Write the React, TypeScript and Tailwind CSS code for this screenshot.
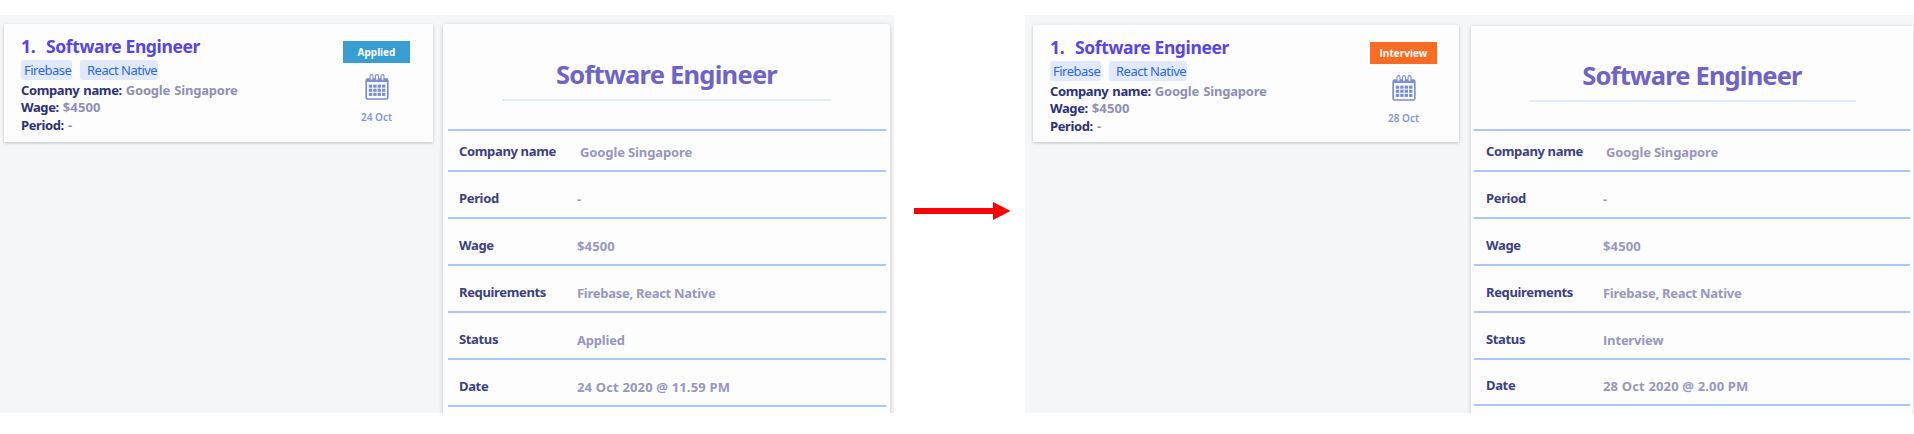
type Job = {
  status: string;
  day: string;
  date: string;
  badge: string;
  statusFont: string;
};

type Layout = {
  panel: string;
  card: string;
  detail: string;
  heading: string;
  rule: string;
  table: string;
  rows: string[];
  value: string;
};

const left: Layout = {
  panel: "w-[894px] pl-[4px] pt-[9px]",
  card: "w-[429px] h-[118px] pr-[23px]",
  detail: "ml-[10px] w-[447px] rounded-t-[3px]",
  heading: "mt-[39px] tracking-[-0.75px]",
  rule: "mt-[15px] w-[329px]",
  table: "mt-[28px] ml-[5px] mr-[4px]",
  rows: ["h-[41px] pl-[11px]", "h-[47px] pl-[11px]", "h-[47px] pl-[11px]", "h-[47px] pl-[11px]", "h-[47px] pl-[11px]", "h-[47px] pl-[11px]"],
  value: "w-[118px]",
};

const right: Layout = {
  panel: "w-[889px] pl-[8px] pt-[10px]",
  card: "w-[426px] h-[117px] pr-[22px]",
  detail: "ml-[12px] mt-[1px] w-[442px]",
  heading: "mt-[38px] tracking-[-0.85px]",
  rule: "mt-[15px] w-[327px]",
  table: "mt-[27px] mx-[3px]",
  rows: ["h-[41px] pl-[12px]", "h-[47px] pl-[12px]", "h-[47px] pl-[12px]", "h-[47px] pl-[12px]", "h-[47px] pl-[12px]", "h-[46px] pl-[12px]"],
  value: "w-[117px]",
};

function Calendar() {
  const cells = [0, 1, 2].flatMap((r) => [0, 1, 2, 3].map((c) => [c, r]));
  return (
    <svg className="mt-[11px] h-[26px] w-[24px]" viewBox="0 0 24 26" fill="none">
      <rect x="1.2" y="5.2" width="21.6" height="19.8" rx="1.6" stroke="#7b8fd0" strokeWidth="1.7" />
      <path d="M1 4.8h22v3.2H1z" fill="#7b8fd0" />
      {[5, 10.5, 16].map((x) => (
        <rect key={x} x={x} y="0.6" width="3" height="5.8" rx="1.5" fill="#fdfdfd" stroke="#7b8fd0" strokeWidth="1.1" />
      ))}
      {cells.map(([c, r]) => (
        <rect key={`${c}-${r}`} x={3.8 + c * 4.4} y={10.6 + r * 4.1} width="3.4" height="3.1" fill="#7b8fd0" />
      ))}
    </svg>
  );
}

function JobCard({ job, layout }: { job: Job; layout: Layout }) {
  return (
    <div
      className={`flex shrink-0 justify-between bg-[#fdfdfd] pl-[17px] shadow-[0_1px_3px_rgba(0,0,0,0.22)] ${layout.card}`}
    >
      <div className="pt-[10px]">
        <div className="flex h-[26px] text-[17.5px] leading-[24px] font-bold tracking-[-0.38px] text-[#5645e8]">
          <span className="w-[25px]">1.</span>
          <span>Software Engineer</span>
        </div>
        <div className="flex gap-[8px] text-[13px] leading-[21px] tracking-[-0.5px] text-[#2b66f0]">
          <span className="h-[20px] w-[51px] rounded-[3px] bg-[#e0eafc] pl-[3px]">Firebase</span>
          <span className="h-[20px] w-[78px] rounded-[3px] bg-[#e0eafc] pl-[7px]">React Native</span>
        </div>
        <div className="mt-[1.5px] text-[13px] leading-[17.8px] font-bold tracking-[-0.38px] text-[#2d3178] [word-spacing:1px]">
          <div>
            Company name: <span className="tracking-[-0.2px] text-[#908fb8]">Google Singapore</span>
          </div>
          <div>
            Wage: <span className="tracking-[0.1px] text-[#908fb8]">$4500</span>
          </div>
          <div>
            Period: <span className="text-[#908fb8]">-</span>
          </div>
        </div>
      </div>
      <div className="flex flex-col items-center pt-[17px]">
        <span
          className={`h-[22px] w-[67px] text-center text-[10px] leading-[23px] font-bold text-white ${job.badge} ${job.statusFont}`}
        >
          {job.status}
        </span>
        <Calendar />
        <span className="mt-[10px] text-[10px] leading-[14px] font-semibold text-[#8495d2]">{job.day}</span>
      </div>
    </div>
  );
}

function Detail({ job, layout }: { job: Job; layout: Layout }) {
  const entries = [
    ["Company name", "Google Singapore", "pl-[3px] tracking-[-0.12px]"],
    ["Period", "-", ""],
    ["Wage", "$4500", "tracking-[0.15px]"],
    ["Requirements", "Firebase, React Native", "tracking-[-0.28px]"],
    ["Status", job.status, `tracking-[-0.2px] ${job.statusFont}`],
    ["Date", job.date, "tracking-[0.16px]"],
  ];
  return (
    <div className={`shrink-0 bg-[#fdfdfd] shadow-[0_1px_4px_rgba(0,0,0,0.22)] ${layout.detail}`}>
      <div className="flex flex-col items-center pt-px">
        <h1 className={`h-[20px] text-[25.5px] leading-[20px] font-bold text-[#6d64c8] ${layout.heading}`}>
          Software Engineer
        </h1>
        <div className={`h-[2px] bg-[#e0ebfe] ${layout.rule}`} />
      </div>
      <div className={`border-t-2 border-[#a9c7fa] ${layout.table}`}>
        {entries.map(([label, value, style], i) => (
          <div
            key={label}
            className={`flex items-end border-b-2 border-[#a9c7fa] pb-[9px] text-[13px] leading-[18px] font-bold ${layout.rows[i]}`}
          >
            <span className={`pb-px tracking-[-0.35px] text-[#3a4083] ${layout.value}`}>{label}</span>
            <span className={`text-[#9897be] ${style}`}>{value}</span>
          </div>
        ))}
      </div>
    </div>
  );
}

function Panel({ job, layout }: { job: Job; layout: Layout }) {
  return (
    <section className={`flex h-[398px] shrink-0 items-start overflow-hidden bg-[#f4f6f8] ${layout.panel}`}>
      <JobCard job={job} layout={layout} />
      <div className="flex h-[400px] items-stretch">
        <Detail job={job} layout={layout} />
      </div>
    </section>
  );
}

export default function App() {
  return (
    <main className="flex h-[434px] w-[1914px] overflow-hidden bg-white pt-[15px] font-['Noto_Sans','Open_Sans',sans-serif]">
      <Panel
        layout={left}
        job={{
          status: "Applied",
          day: "24 Oct",
          date: "24 Oct 2020 @ 11.59 PM",
          badge: "bg-[#389dd1]",
          statusFont: "font-['Noto_Sans',sans-serif]",
        }}
      />
      <div className="w-[131px] shrink-0 pt-[187px] pl-[20px]">
        <svg width="97" height="18" viewBox="0 0 97 18">
          <path d="M0 6h79V0l17.5 9L79 18v-6H0z" fill="#ff0000" />
        </svg>
      </div>
      <Panel
        layout={right}
        job={{
          status: "Interview",
          day: "28 Oct",
          date: "28 Oct 2020 @ 2.00 PM",
          badge: "bg-[#fa6b24]",
          statusFont: "font-['Open_Sans',sans-serif]",
        }}
      />
    </main>
  );
}
